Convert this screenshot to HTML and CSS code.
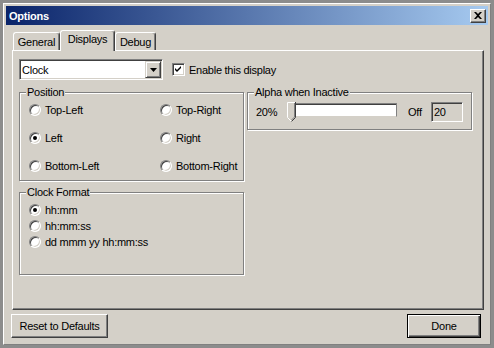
FILE: index.html
```html
<!DOCTYPE html>
<html lang="en">
<head>
  <meta charset="UTF-8" />
  <title>Options</title>
  <link rel="stylesheet" href="styles.css">
</head>
<body>

<div class="window">
  <div class="frame">
    <div class="titlebar">
      <span class="title">Options</span>
      <span class="close">
        <svg width="8" height="7" viewBox="0 0 8 7"><path d="M0 0h2l2 2 2-2h2L5 3.5 8 7H6L4 5 2 7H0l3-3.5z" fill="#000"/></svg>
      </span>
    </div>

    <div class="tabs">
      <div class="tab tab-general">General</div>
      <div class="tab tab-displays active">Displays</div>
      <div class="tab tab-debug">Debug</div>
    </div>

    <div class="panel">
      <div class="top-row">
        <div class="combo">
          <span class="combo-text">Clock</span>
          <span class="combo-btn">
            <svg width="7" height="4" viewBox="0 0 7 4"><polygon points="0,0 7,0 3.5,4" fill="#000"/></svg>
          </span>
        </div>
        <label class="check">
          <span class="checkbox">
            <svg width="9" height="9" viewBox="0 0 9 9"><path d="M1 3l2 2 4-4v2L3 7 1 5z" fill="#000"/></svg>
          </span>
          Enable this display
        </label>
      </div>

      <div class="columns">
        <div class="col">
          <fieldset class="group">
            <legend>Position</legend>
            <div class="position-grid">
              <label class="option"><span class="radio"></span>Top-Left</label>
              <label class="option"><span class="radio"></span>Top-Right</label>
              <label class="option"><span class="radio on"></span>Left</label>
              <label class="option"><span class="radio"></span>Right</label>
              <label class="option"><span class="radio"></span>Bottom-Left</label>
              <label class="option"><span class="radio"></span>Bottom-Right</label>
            </div>
          </fieldset>

          <fieldset class="group format">
            <legend>Clock Format</legend>
            <div class="format-list">
              <label class="option"><span class="radio on"></span>hh:mm</label>
              <label class="option"><span class="radio"></span>hh:mm:ss</label>
              <label class="option"><span class="radio"></span>dd mmm yy hh:mm:ss</label>
            </div>
          </fieldset>
        </div>

        <div class="col">
          <fieldset class="group">
            <legend>Alpha when Inactive</legend>
            <div class="alpha-row">
              <span class="alpha-min">20%</span>
              <div class="slider">
                <svg class="thumb" width="9" height="21" viewBox="0 0 9 21">
                  <path d="M0.5 0.5H8.5V15.5L4.5 19.5L0.5 15.5Z" fill="#d4d0c8"/>
                  <polyline points="4.5,19.5 0.5,15.5 0.5,0.5 8,0.5" fill="none" stroke="#fff"/>
                  <polyline points="8.5,0 8.5,15.5 4.5,19.5" fill="none" stroke="#404040"/>
                  <polyline points="7.5,1 7.5,15 4.5,18" fill="none" stroke="#808080"/>
                </svg>
                <span class="track"></span>
              </div>
              <span class="alpha-max">Off</span>
              <span class="edit">20</span>
            </div>
          </fieldset>
        </div>
      </div>
    </div>

    <div class="buttons">
      <button class="btn btn-reset">Reset to Defaults</button>
      <button class="btn btn-done">Done</button>
    </div>
  </div>
</div>

</body>
</html>
```

FILE: styles.css
```css
body {
  margin: 0;
  background: #8c8c8c;
  font-family: "Liberation Sans", Arial, sans-serif;
  font-size: 11px;
  letter-spacing: -0.25px;
  color: #000;
}

.window {
  width: 494px;
  height: 348px;
  box-sizing: border-box;
  border: 3px solid #8c8c8c;
  background: #d4d0c8;
}

.frame {
  height: 100%;
  box-sizing: border-box;
  border: 1px solid;
  border-color: #fff #808080 #808080 #fff;
  padding: 2px;
  display: flex;
  flex-direction: column;
}

/* title bar */

.titlebar {
  height: 19px;
  flex: none;
  display: flex;
  align-items: center;
  justify-content: space-between;
  padding: 0 2px 0 3px;
  background: linear-gradient(to right, #0a246a, #a6caf0);
  color: #fff;
  font-weight: bold;
}

.close {
  width: 16px;
  height: 14px;
  box-sizing: border-box;
  display: flex;
  align-items: center;
  justify-content: center;
  background: #d4d0c8;
  border: 1px solid;
  border-color: #fff #404040 #404040 #fff;
  box-shadow: inset -1px -1px #808080;
}

/* tabs */

.tabs {
  display: flex;
  align-items: flex-end;
  height: 20px;
  margin: 5px 0 0 7px;
  flex: none;
  position: relative;
  z-index: 1;
}

.tab {
  height: 18px;
  box-sizing: border-box;
  border: 1px solid;
  border-color: #fff #404040 #d4d0c8 #fff;
  border-bottom: none;
  border-radius: 3px 3px 0 0;
  box-shadow: inset -1px 0 #808080;
  padding-top: 2px;
  line-height: 15px;
  text-align: center;
  background: #d4d0c8;
}

.tab-general { width: 47px; }
.tab-displays { width: 55px; }
.tab-debug { width: 41px; }

.tab.active {
  height: 21px;
  margin-bottom: -1px;
  padding-top: 1px;
}

.panel {
  flex: none;
  height: 260px;
  box-sizing: border-box;
  margin: 0 4px 0 6px;
  border: 1px solid;
  border-color: #fff #404040 #404040 #fff;
  box-shadow: inset -1px -1px #808080;
  padding: 8px 6px;
}

/* top row */

.top-row {
  display: flex;
  align-items: center;
  gap: 9px;
}

.combo {
  width: 144px;
  height: 21px;
  box-sizing: border-box;
  display: flex;
  align-items: center;
  justify-content: space-between;
  background: #fff;
  border: 1px solid;
  border-color: #808080 #fff #fff #808080;
  box-shadow: inset 1px 1px #404040, inset -1px -1px #d4d0c8;
  padding: 1px 1px 1px 2px;
}

.combo-btn {
  width: 16px;
  height: 17px;
  box-sizing: border-box;
  display: flex;
  align-items: center;
  justify-content: center;
  background: #d4d0c8;
  border: 1px solid;
  border-color: #d4d0c8 #404040 #404040 #d4d0c8;
  box-shadow: inset 1px 1px #fff, inset -1px -1px #808080;
}

.check {
  display: flex;
  align-items: center;
  gap: 4px;
}

.checkbox,
.edit {
  box-sizing: border-box;
  border: 1px solid;
  border-color: #808080 #fff #fff #808080;
  box-shadow: inset 1px 1px #404040, inset -1px -1px #d4d0c8;
}

.checkbox {
  width: 13px;
  height: 13px;
  display: flex;
  align-items: center;
  justify-content: center;
  background: #fff;
}

/* group boxes */

.columns {
  display: flex;
  align-items: flex-start;
  gap: 3px;
  margin-top: 6px;
}

.group {
  width: 225px;
  min-width: 0;
  box-sizing: border-box;
  margin: 0;
  padding: 0;
  border: 1px solid #808080;
  box-shadow: inset 1px 1px #fff, 1px 1px #fff;
}

.group legend {
  margin-left: 6px;
  padding: 0 1px;
  line-height: 13px;
  background: #d4d0c8;
}

.format {
  margin-top: 5px;
}

.position-grid {
  display: grid;
  grid-template-columns: 131px auto;
  grid-auto-rows: 20px;
  row-gap: 8px;
  padding: 1px 0 4px 9px;
}

.format-list {
  display: grid;
  grid-auto-rows: 16px;
  padding: 3px 0 24px 9px;
}

.option {
  display: flex;
  align-items: center;
  gap: 4px;
}

.radio {
  width: 12px;
  height: 12px;
  box-sizing: border-box;
  border-radius: 50%;
  border: 1px solid;
  border-color: #808080 #fff #fff #808080;
  box-shadow: inset 1px 1px #404040, inset -1px -1px #d4d0c8;
  background: #fff;
  display: flex;
  align-items: center;
  justify-content: center;
}

.radio.on::after {
  content: "";
  width: 4px;
  height: 4px;
  border-radius: 50%;
  background: #000;
}

/* alpha slider */

.alpha-row {
  display: flex;
  align-items: center;
  height: 20px;
  padding: 3px 8px 7px 8px;
}

.alpha-min {
  width: 31px;
}

.slider {
  width: 110px;
  height: 21px;
  display: flex;
  align-items: center;
  margin-right: 11px;
}

.thumb {
  flex: none;
  margin-top: 1px;
  position: relative;
  z-index: 1;
}

.track {
  width: 103px;
  height: 14px;
  margin-left: -2px;
  margin-top: -4px;
  box-sizing: border-box;
  background: #fff;
  border: 1px solid;
  border-color: #808080 #808080 #d4d0c8 #808080;
  box-shadow: inset 1px 1px #404040;
}

.alpha-max {
  width: 23px;
}

.edit {
  width: 32px;
  height: 20px;
  padding: 2px 0 0 2px;
  line-height: 14px;
  background: #d4d0c8;
}

/* bottom buttons */

.buttons {
  display: flex;
  justify-content: space-between;
  margin: 4px 7px 0 5px;
}

.btn {
  height: 24px;
  box-sizing: border-box;
  font: inherit;
  letter-spacing: inherit;
  color: #000;
  background: #d4d0c8;
  border: 1px solid;
  border-color: #fff #404040 #404040 #fff;
  box-shadow: inset -1px -1px #808080;
  padding: 0;
}

.btn-reset { width: 97px; }

.btn-done {
  width: 74px;
  border-color: #000;
  box-shadow: inset 1px 1px #fff, inset -1px -1px #404040, inset -2px -2px #808080;
}
```
